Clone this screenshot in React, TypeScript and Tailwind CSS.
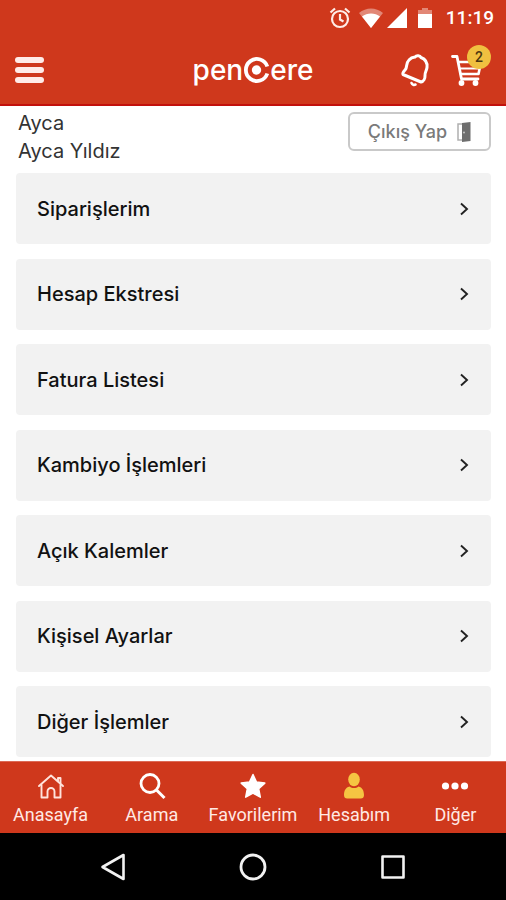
import React from 'react';

const menuItems = [
  'Siparişlerim',
  'Hesap Ekstresi',
  'Fatura Listesi',
  'Kambiyo İşlemleri',
  'Açık Kalemler',
  'Kişisel Ayarlar',
  'Diğer İşlemler',
];

const HomeIcon = () => (
  <svg className="w-7 h-7" viewBox="0 0 28 28" fill="none" stroke="#ffe3dc" strokeWidth="1.900" strokeLinejoin="round" strokeLinecap="round">
    <path d="M2 14 14 3.500 26 14" />
    <path d="M4.500 13V25.500h6V19.500a3.500 3.500 0 0 1 7 0v6h6V13" />
    <path d="M21 9V6h2.500v5" />
  </svg>
);

const SearchIcon = () => (
  <svg className="w-7 h-7" viewBox="0 0 28 28" fill="none" stroke="white" strokeWidth="2.8">
    <circle cx="12" cy="11.500" r="9" />
    <path d="m18.500 18 8 8" strokeWidth="3" />
  </svg>
);

const StarIcon = () => (
  <svg className="w-7 h-7" viewBox="0 0 28 28" fill="white" stroke="white" strokeWidth="1.500" strokeLinejoin="round">
    <path d="m14 2.500 3.500 7.600 8.300 1-6.100 5.700 1.600 8.400-7.300-4.100-7.300 4.100 1.600-8.400-6.100-5.700 8.300-1z" />
  </svg>
);

const UserIcon = () => (
  <svg className="w-7 h-7" viewBox="0 0 28 28" fill="#f5c542">
    <ellipse cx="14" cy="7.500" rx="5.800" ry="6.700" />
    <path d="M9.500 14.500c2.500 2 6.500 2 9 0 3.800 1 5.500 4 5.500 8.500 0 2.500-1.200 3.500-3.200 3.500H7.200C5.200 26.500 4 25.500 4 23c0-4.500 1.700-7.500 5.500-8.500z" />
  </svg>
);

const DotsIcon = () => (
  <svg className="w-7 h-7" viewBox="0 0 28 28" fill="white">
    <circle cx="4.500" cy="14" r="3.600" />
    <circle cx="14" cy="14" r="3.600" />
    <circle cx="23.500" cy="14" r="3.600" />
  </svg>
);

const tabs = [
  { label: 'Anasayfa', icon: HomeIcon },
  { label: 'Arama', icon: SearchIcon },
  { label: 'Favorilerim', icon: StarIcon },
  { label: 'Hesabım', icon: UserIcon },
  { label: 'Diğer', icon: DotsIcon },
];

const StatusBar = () => (
  <div className="h-9 flex items-center justify-end pr-3 text-white">
    <svg className="w-[22px] h-[22px] mr-2" viewBox="0 0 22 22" fill="none" stroke="#ffece7" strokeWidth="2.200">
      <circle cx="11" cy="12" r="8" />
      <path d="M11 7v5.500l3.500 2M1.500 5.500l4.500-4M20.500 5.500l-4.500-4" />
    </svg>
    <svg className="w-6 h-5 mr-1" viewBox="0 0 24 20" fill="white">
      <path d="M12 20 0 5C7-1 17-1 24 5z" opacity="0.4" />
      <path d="M12 20 3 8.500c5-4 13-4 18 0z" />
    </svg>
    <svg className="w-5 h-5 mr-[11px]" viewBox="0 0 20 20" fill="white">
      <path d="M20 0v20H0z" />
    </svg>
    <svg className="w-[14px] h-5 mr-[14px]" viewBox="0 0 14 20" fill="white">
      <path d="M0 2h4V0h6v2h4v18H0z" opacity="0.4" />
      <path d="M0 6h14v14H0z" />
    </svg>
    <span className="text-[19px] leading-6 font-medium">11:19</span>
  </div>
);

const Header = () => (
  <header className="bg-[#cf381c] border-b-2 border-[#c2100c] font-[Roboto,sans-serif]">
    <StatusBar />
    <div className="h-[68px] px-[15px] grid grid-cols-3 items-center">
      <button type="button" aria-label="Menü" className="w-[29px] flex flex-col gap-[4px]">
        <span className="h-[6px] rounded-sm bg-[#ffece8]" />
        <span className="h-[6px] rounded-sm bg-[#ffece8]" />
        <span className="h-[6px] rounded-sm bg-[#ffece8]" />
      </button>

      <a href="#" aria-label="Pencere" className="flex items-center justify-center text-white text-[28px] leading-8 font-medium font-[Inter,sans-serif]">
        <span>pen</span>
        <svg className="w-[27px] h-[26px] shrink-0" viewBox="0 0 27 26" fill="none" stroke="white">
          <path d="M24.300 16.500a11 11 0 1 1 0-7" strokeWidth="3.800" />
          <circle cx="13.500" cy="13" r="4.700" fill="white" stroke="none" />
        </svg>
        <span>ere</span>
      </a>

      <div className="flex items-center justify-end gap-[21px] pr-2">
        <button type="button" aria-label="Bildirimler">
          <svg className="w-[30px] h-[34px]" viewBox="0 0 30 34" fill="none" stroke="white" strokeWidth="3" strokeLinejoin="round" strokeLinecap="round">
            <path d="M15 4c1.500-1.800 5-1.500 6 .5 4 1.500 6.500 5 6 10-.3 3-2.300 5-2 8 .2 3-1.500 6-4 6.500L3 21.500c-1-2.500 2-4 3-6C7 12.500 6.500 9.500 9 7c1.500-1.800 3.500-2.800 6-3z" />
            <path d="M11.500 30c.8 1.800 2.500 2.200 4 1.500" strokeWidth="2.600" />
          </svg>
        </button>
        <button type="button" aria-label="Sepet" className="relative">
          <svg className="w-[32px] h-[34px]" viewBox="0 0 32 34" fill="none" stroke="white" strokeLinecap="round" strokeLinejoin="round">
            <path d="M1.500 3.500H6L10.500 26H27" strokeWidth="2.800" />
            <path d="M7.500 9H30l-2.500 12H10" strokeWidth="2.600" />
            <path d="M9 15.500h19" strokeWidth="2.200" />
            <circle cx="10.500" cy="30" r="2.900" fill="white" stroke="none" />
            <circle cx="24.500" cy="30" r="2.900" fill="white" stroke="none" />
          </svg>
          <span className="absolute -top-2 -right-2 w-6 h-6 rounded-full bg-[#f0c040] text-[#4a3510] text-sm leading-6 font-medium text-center">
            2
          </span>
        </button>
      </div>
    </div>
  </header>
);

const App = () => {
  return (
    <div className="min-h-screen flex flex-col bg-white font-[Inter,sans-serif]">
      <Header />

      <main className="flex-1 flex flex-col pl-4 pr-[15px] pb-1">
        <div className="flex justify-between items-start pt-[3px] pb-2">
          <div className="text-xl leading-[28px] text-[#333333] pl-[2px]">
            <p>Ayca</p>
            <p>Ayca Yıldız</p>
          </div>
          <button
            type="button"
            className="h-[39px] w-[143px] mt-[3px] flex items-center justify-center gap-[10px] border-2 border-[#c9c9c9] rounded-md text-lg leading-6 font-medium text-[#7a7a7a]"
          >
            Çıkış Yap
            <svg className="w-[14px] h-5" viewBox="0 0 14 20">
              <path d="M1 2h8v16H1z" fill="none" stroke="#b0b0b0" strokeWidth="1.500" />
              <path d="m5 1 8.500-1v19L5 20z" fill="#6e6e6e" />
              <circle cx="7" cy="10.500" r="0.900" fill="#d0d0d0" />
            </svg>
          </button>
        </div>

        {/* Account menu */}
        <nav className="flex-1 flex flex-col justify-between gap-3">
          {menuItems.map((item) => (
            <a
              key={item}
              href="#"
              className="h-[71px] px-[21px] flex items-center justify-between rounded-sm bg-[#f2f2f2] text-xl font-medium text-[#111111]"
            >
              {item}
              <svg className="w-3 h-4" viewBox="0 0 12 16" fill="none" stroke="#222222" strokeWidth="1.900">
                <path d="m3 2.500 6 5.500-6 5.500" />
              </svg>
            </a>
          ))}
        </nav>
      </main>

      {/* Bottom tabs */}
      <nav className="h-[72px] grid grid-cols-5 bg-[#cf381c] border-t border-[#dc6a56] font-[Roboto,sans-serif]">
        {tabs.map(({ label, icon: Icon }) => (
          <a key={label} href="#" className="flex flex-col items-center pt-[10px] gap-[3px] text-lg leading-6 text-[#ffe9e4]">
            <Icon />
            {label}
          </a>
        ))}
      </nav>

      {/* System buttons */}
      <div className="h-[67px] flex items-center justify-center gap-[112px] bg-black">
        <button type="button" aria-label="Geri">
          <svg className="w-7 h-7" viewBox="0 0 28 28" fill="none" stroke="#f2f2f2" strokeWidth="2.600" strokeLinejoin="round">
            <path d="M24.500 2v24L3.500 14z" />
          </svg>
        </button>
        <button type="button" aria-label="Ana ekran">
          <svg className="w-7 h-7" viewBox="0 0 28 28" fill="none" stroke="#f2f2f2" strokeWidth="2.800">
            <circle cx="14" cy="14" r="12" />
          </svg>
        </button>
        <button type="button" aria-label="Son uygulamalar">
          <svg className="w-7 h-7" viewBox="0 0 28 28" fill="none" stroke="#f2f2f2" strokeWidth="2.600" strokeLinejoin="round">
            <path d="M3.500 3.500h21v21h-21z" />
          </svg>
        </button>
      </div>
    </div>
  );
};

export default App;
